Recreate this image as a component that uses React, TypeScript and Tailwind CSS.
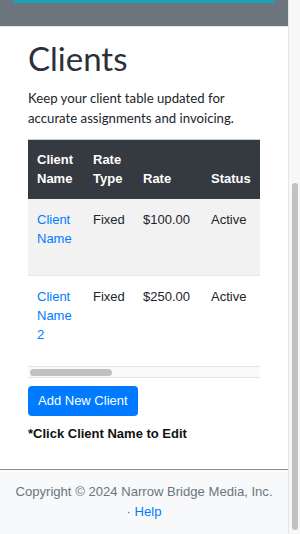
import React from "react";

const rows = [
  { name: ["Client", "Name"], type: "Fixed", rate: "$100.00", status: "Active", h: "h-[77px]", bg: "bg-[#f2f2f2]" },
  { name: ["Client", "Name", "2"], type: "Fixed", rate: "$250.00", status: "Active", h: "h-[91px]", bg: "bg-white" },
];

export default function App() {
  return (
    <div className="flex h-[534px] w-[300px] overflow-hidden bg-white">
      <div className="flex w-[288px] flex-col">
        <div className="h-[27px] shrink-0 border-b border-[#e3e5e8] bg-[#6c757d] px-[13px]">
          <div className="h-[3px] rounded-b-[3px] bg-[#17a2b8]" />
        </div>
        <div className="flex-1 pl-[28px] pr-[28px]" style={{ fontFamily: "Lato, sans-serif" }}>
          <h1 className="mt-[11px] text-[33px] leading-[40px] text-[#2b303a]">Clients</h1>
          <p className="mt-[10px] text-[13.2px] leading-[20px] text-[#212529]">
            Keep your client table updated for accurate assignments and invoicing.
          </p>
          <div className="mt-[11px] w-[232px] overflow-hidden" style={{ fontFamily: '"Liberation Sans", Arial, sans-serif' }}>
            <div className="w-[420px]">
              <div className="flex h-[60px] items-start border-t border-[#c8ccd0] bg-[#343a40] pt-[10px] text-[13px] font-bold leading-[19px] text-white">
                <div className="w-[56px] pl-[9px]">Client<br />Name</div>
                <div className="w-[50px] pl-[9px]">Rate<br />Type</div>
                <div className="w-[68px] pl-[9px]"><br />Rate</div>
                <div className="w-[80px] pl-[9px]"><br />Status</div>
              </div>
              {rows.map((r, i) => (
                <div key={i} className={`flex items-start ${r.h} ${r.bg} border-b border-[#e4e7ea] pt-[11px] text-[13px] leading-[19px] text-[#212529]`}>
                  <div className="w-[56px] pl-[9px] text-[#007bff]">
                    {r.name.map((n, j) => (
                      <div key={j}>{n}</div>
                    ))}
                  </div>
                  <div className="w-[50px] pl-[9px]">{r.type}</div>
                  <div className="w-[68px] pl-[9px]">{r.rate}</div>
                  <div className="w-[80px] pl-[9px]">{r.status}</div>
                </div>
              ))}
            </div>
            <div className="flex h-[11px] items-center border-b border-[#e4e7ea] bg-[#fafafa] px-[2px]">
              <div className="h-[7px] w-[82px] rounded-full bg-[#c1c1c1]" />
            </div>
          </div>
          <button className="mt-[8px] h-[30px] rounded-[4px] bg-[#007bff] px-[10px] text-[13px] text-white" style={{ fontFamily: '"Liberation Sans", Arial, sans-serif' }}>
            Add New Client
          </button>
          <div className="mt-[9px] text-[13px] font-bold leading-[18px] text-[#111]" style={{ fontFamily: '"Liberation Sans", Arial, sans-serif' }}>
            *Click Client Name to Edit
          </div>
        </div>
        <div className="h-[65px] shrink-0 border-t border-[#8a8f94] bg-[#f8f9fa] pt-[12px] text-center text-[13.1px] leading-[20px] text-[#6c757d]" style={{ fontFamily: '"Liberation Sans", Arial, sans-serif' }}>
          <div>Copyright © 2024 Narrow Bridge Media, Inc.</div>
          <div>
            · <span className="text-[#007bff]">Help</span>
          </div>
        </div>
      </div>
      <div className="flex w-[12px] flex-col border-l border-[#e6e6e6] bg-[#f7f7f7] pb-[4px] pt-[183px]">
        <div className="mx-auto w-[6px] flex-1 rounded-full bg-[#c1c1c1]" />
      </div>
    </div>
  );
}
